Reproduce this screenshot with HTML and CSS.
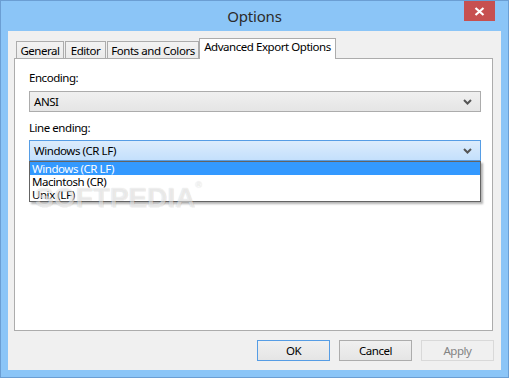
FILE: index.html
```html
<!DOCTYPE html>
<html>
<head>
<meta charset="utf-8">
<link rel="stylesheet" href="styles.css">
</head>
<body>
<div class="window">
  <div class="titlebar">
    <div class="title">Options</div>
    <div class="close"><svg width="11" height="9" viewBox="0 0 11 9"><path d="M1.5 1 L9.5 8 M9.5 1 L1.5 8" stroke="#fff" stroke-width="2.2"/></svg></div>
  </div>
  <div class="client">
    <div class="tabs">
      <div class="tab t-general">General</div>
      <div class="tab t-editor">Editor</div>
      <div class="tab t-fonts">Fonts and Colors</div>
      <div class="tab active t-adv">Advanced Export Options</div>
    </div>
    <div class="panel">
      <div class="label first">Encoding:</div>
      <div class="combo">
        <span>ANSI</span>
        <svg class="chev" width="9" height="6" viewBox="0 0 9 6"><path d="M1 1 L4.5 4.5 L8 1" fill="none" stroke="#555" stroke-width="2"/></svg>
      </div>
      <div class="label second">Line ending:</div>
      <div class="combo open">
        <span>Windows (CR LF)</span>
        <svg class="chev" width="9" height="6" viewBox="0 0 9 6"><path d="M1 1 L4.5 4.5 L8 1" fill="none" stroke="#555" stroke-width="2"/></svg>
        <div class="list">
          <div class="item sel">Windows (CR LF)</div>
          <div class="item">Macintosh (CR)</div>
          <div class="item">Unix (LF)</div>
        </div>
      </div>
      <div class="watermark">SOFTPEDIA<sup>®</sup></div>
    </div>
    <div class="buttons">
      <div class="btn default">OK</div>
      <div class="btn">Cancel</div>
      <div class="btn disabled">Apply</div>
    </div>
  </div>
</div>
</body>
</html>
```

FILE: styles.css
```css
* { box-sizing: border-box; }
html, body { margin: 0; padding: 0; }
body {
  width: 509px;
  height: 378px;
  font-family: "Noto Sans", "Open Sans", sans-serif;
  font-size: 11.5px;
  letter-spacing: -0.45px;
  color: #000;
  overflow: hidden;
}
.window {
  width: 509px;
  height: 378px;
  background: #8bc5f7;
  border: 1px solid #6b9ed3;
  display: flex;
  flex-direction: column;
  padding: 0 7px 7px 7px;
}
.titlebar {
  height: 30px;
  flex: none;
  position: relative;
  display: flex;
  align-items: center;
  justify-content: center;
}
.title {
  font-size: 15px;
  letter-spacing: -0.2px;
  color: #2b2b2b;
  padding-bottom: 1px;
}
.close {
  position: absolute;
  right: 6px;
  top: 0;
  width: 31px;
  height: 20px;
  background: #c75050;
  display: flex;
  align-items: center;
  justify-content: center;
}
.client {
  flex: 1;
  background: #f0f0f0;
  display: flex;
  flex-direction: column;
  padding: 7px 8px 9px 6px;
}
.tabs {
  display: flex;
  align-items: flex-end;
  height: 20px;
  padding-left: 2px;
  position: relative;
  z-index: 2;
}
.tab {
  height: 17px;
  border: 1px solid #acacac;
  border-bottom: none;
  background: linear-gradient(#f3f3f3, #ebebeb);
  display: flex;
  align-items: center;
  justify-content: center;
  margin-right: 1px;
  white-space: nowrap;
  line-height: 1;
  padding-top: 1px;
}
.t-general { width: 48px; }
.t-editor { width: 41px; }
.t-fonts { width: 92px; margin-right: 0; }
.t-adv { width: 137px; }
.tab.active {
  height: 21px;
  background: #fff;
  margin-bottom: -1px;
  padding-top: 0;
  padding-bottom: 4px;
}
.panel {
  flex: 1;
  background: #fff;
  border: 1px solid #acacac;
  padding: 11px 11px 0 14px;
  display: flex;
  flex-direction: column;
  position: relative;
}
.label {
  line-height: 15px;
  height: 15px;
}
.label.first { margin-bottom: 6px; }
.label.second { margin-top: 8px; margin-bottom: 5px; }
.combo {
  height: 21px;
  border: 1px solid #acacac;
  background: linear-gradient(#f0f0f0, #e5e5e5);
  display: flex;
  align-items: center;
  justify-content: space-between;
  padding: 0 8px 0 4px;
  position: relative;
}
.combo span { line-height: 1; }
.combo.open {
  border-color: #569de5;
  background: linear-gradient(#dcecfc, #c4e0fc);
}
.chev { display: block; margin-top: 1px; }
.list {
  position: absolute;
  left: -1px;
  right: -1px;
  top: 20px;
  background: #fff;
  border: 1px solid #646464;
  padding: 0;
  box-shadow: 2px 2px 2px rgba(0,0,0,0.3);
  z-index: 3;
}
.item {
  height: 13px;
  line-height: 13px;
  padding-left: 2px;
}
.item.sel {
  background: #3399ff;
  color: #fff;
}
.watermark {
  position: absolute;
  left: 20px;
  top: 125px;
  font-family: "Liberation Sans", Arial, sans-serif;
  font-weight: bold;
  font-size: 28px;
  line-height: 28px;
  letter-spacing: 0;
  color: rgba(255,255,255,0.55);
  text-shadow: 0 0 1px rgba(0,0,0,0.16), 1px 1px 0 rgba(0,0,0,0.04);
  z-index: 4;
  pointer-events: none;
}
.watermark sup { font-size: 9px; vertical-align: top; line-height: 1; position: relative; top: -3px; }
.buttons {
  display: flex;
  justify-content: flex-end;
  gap: 9px;
  margin-top: 9px;
  margin-right: -1px;
}
.btn {
  width: 73px;
  height: 21px;
  border: 1px solid #acacac;
  background: linear-gradient(#f0f0f0, #e5e5e5);
  display: flex;
  align-items: center;
  justify-content: center;
  line-height: 1;
}
.btn.default { border-color: #569de5; }
.btn.disabled { color: #838383; border-color: #d9d9d9; background: #f0f0f0; }
```
